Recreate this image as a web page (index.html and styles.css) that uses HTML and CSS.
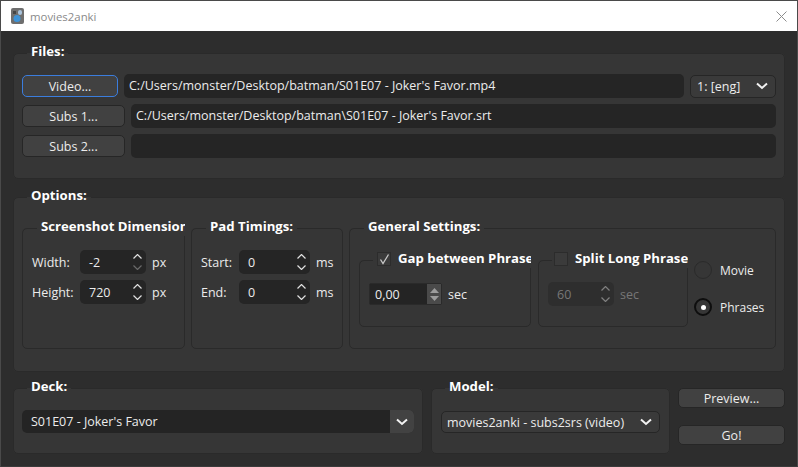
FILE: index.html
```html
<!DOCTYPE html>
<html lang="en">
  <head>
    <meta charset="UTF-8" />
    <title>movies2anki</title>
    <link rel="stylesheet" href="styles.css">
  </head>
  <body>
    <div class="window">
      <div class="titlebar">
        <svg class="app-icon" width="13" height="16" viewBox="0 0 13 16">
          <rect x="0" y="0" width="13" height="16" rx="2" fill="#6e6e6e" />
          <rect x="7" y="2" width="4" height="5" rx="2" fill="#a9c3dc" />
          <circle cx="6" cy="10.5" r="3.5" fill="#3d93d8" />
          <rect x="2" y="3" width="3" height="3" fill="#454545" />
        </svg>
        <span class="app-title">movies2anki</span>
        <svg class="close-icon" width="11" height="11" viewBox="0 0 11 11">
          <path d="M0.5 0.5 L10.5 10.5 M10.5 0.5 L0.5 10.5" stroke="#8c8c8c" fill="none" />
        </svg>
      </div>

      <div class="content">
        <fieldset class="group files-group">
          <legend>Files:</legend>
          <div class="file-row">
            <button class="btn btn-focus video-btn">Video...</button>
            <div class="line-edit">C:/Users/monster/Desktop/batman/S01E07 - Joker's Favor.mp4</div>
            <div class="combo track-combo">
              <span>1: [eng]</span>
              <svg class="chevron" width="12" height="8" viewBox="0 0 12 8"><path d="M1 1.5 L6 6 L11 1.5" /></svg>
            </div>
          </div>
          <div class="file-row">
            <button class="btn subs-btn">Subs 1...</button>
            <div class="line-edit">C:/Users/monster/Desktop/batman\S01E07 - Joker's Favor.srt</div>
          </div>
          <div class="file-row">
            <button class="btn subs-btn">Subs 2...</button>
            <div class="line-edit"></div>
          </div>
        </fieldset>

        <fieldset class="group options-group">
          <legend>Options:</legend>
          <div class="options-row">
            <fieldset class="group inner dims-group">
              <legend class="clipped">Screenshot Dimensions:</legend>
              <div class="field-grid dims-grid">
                <span>Width:</span>
                <div class="spin">
                  <span>-2</span>
                  <div class="spin-arrows">
                    <svg width="9" height="5" viewBox="0 0 9 5"><path d="M0.5 4.5 L4.5 0.5 L8.5 4.5" /></svg>
                    <svg class="dim" width="9" height="5" viewBox="0 0 9 5"><path d="M0.5 0.5 L4.5 4.5 L8.5 0.5" /></svg>
                  </div>
                </div>
                <span>px</span>
                <span>Height:</span>
                <div class="spin">
                  <span>720</span>
                  <div class="spin-arrows">
                    <svg width="9" height="5" viewBox="0 0 9 5"><path d="M0.5 4.5 L4.5 0.5 L8.5 4.5" /></svg>
                    <svg width="9" height="5" viewBox="0 0 9 5"><path d="M0.5 0.5 L4.5 4.5 L8.5 0.5" /></svg>
                  </div>
                </div>
                <span>px</span>
              </div>
            </fieldset>

            <fieldset class="group inner pad-group">
              <legend>Pad Timings:</legend>
              <div class="field-grid pad-grid">
                <span>Start:</span>
                <div class="spin">
                  <span>0</span>
                  <div class="spin-arrows">
                    <svg width="9" height="5" viewBox="0 0 9 5"><path d="M0.5 4.5 L4.5 0.5 L8.5 4.5" /></svg>
                    <svg width="9" height="5" viewBox="0 0 9 5"><path d="M0.5 0.5 L4.5 4.5 L8.5 0.5" /></svg>
                  </div>
                </div>
                <span>ms</span>
                <span>End:</span>
                <div class="spin">
                  <span>0</span>
                  <div class="spin-arrows">
                    <svg width="9" height="5" viewBox="0 0 9 5"><path d="M0.5 4.5 L4.5 0.5 L8.5 4.5" /></svg>
                    <svg width="9" height="5" viewBox="0 0 9 5"><path d="M0.5 0.5 L4.5 4.5 L8.5 0.5" /></svg>
                  </div>
                </div>
                <span>ms</span>
              </div>
            </fieldset>

            <fieldset class="group inner general-group">
              <legend>General Settings:</legend>
              <div class="general-row">
                <fieldset class="group check-group gap-group">
                  <legend class="check-legend">
                    <span class="checkbox">
                      <svg width="11" height="11" viewBox="0 0 11 11"><path d="M1.5 5.5 L4 9.5 L9.5 0.5" /></svg>
                    </span>
                    <span>Gap between Phrases</span>
                  </legend>
                  <div class="spin-row">
                    <div class="spin-small">
                      <span>0,00</span>
                      <div class="step-block">
                        <svg width="9" height="5" viewBox="0 0 9 5"><path d="M4.5 0 L9 5 L0 5 Z" /></svg>
                        <svg width="9" height="5" viewBox="0 0 9 5"><path d="M0 0 L9 0 L4.5 5 Z" /></svg>
                      </div>
                    </div>
                    <span>sec</span>
                  </div>
                </fieldset>

                <fieldset class="group check-group split-group">
                  <legend class="check-legend">
                    <span class="checkbox"></span>
                    <span>Split Long Phrases</span>
                  </legend>
                  <div class="spin-row disabled">
                    <div class="spin split-spin">
                      <span>60</span>
                      <div class="spin-arrows">
                        <svg width="9" height="5" viewBox="0 0 9 5"><path d="M0.5 4.5 L4.5 0.5 L8.5 4.5" /></svg>
                        <svg width="9" height="5" viewBox="0 0 9 5"><path d="M0.5 0.5 L4.5 4.5 L8.5 0.5" /></svg>
                      </div>
                    </div>
                    <span>sec</span>
                  </div>
                </fieldset>

                <div class="radios">
                  <div class="radio-item"><span class="radio"></span><span>Movie</span></div>
                  <div class="radio-item"><span class="radio radio-on"></span><span>Phrases</span></div>
                </div>
              </div>
            </fieldset>
          </div>
        </fieldset>

        <div class="bottom-row">
          <fieldset class="group deck-group">
            <legend>Deck:</legend>
            <div class="deck-combo">
              <span>S01E07 - Joker's Favor</span>
              <div class="deck-arrow">
                <svg class="chevron" width="12" height="8" viewBox="0 0 12 8"><path d="M1 1.5 L6 6 L11 1.5" /></svg>
              </div>
            </div>
          </fieldset>

          <fieldset class="group model-group">
            <legend>Model:</legend>
            <div class="combo model-combo">
              <span>movies2anki - subs2srs (video)</span>
              <svg class="chevron" width="12" height="8" viewBox="0 0 12 8"><path d="M1 1.5 L6 6 L11 1.5" /></svg>
            </div>
          </fieldset>

          <div class="actions">
            <button class="btn">Preview...</button>
            <button class="btn">Go!</button>
          </div>
        </div>
      </div>
    </div>
  </body>
</html>
```

FILE: styles.css
```css
* {
  box-sizing: border-box;
}

body {
  margin: 0;
  font-family: "Open Sans", "Noto Sans", sans-serif;
  font-size: 12.5px;
  color: #ececec;
  overflow: hidden;
}

.window {
  width: 798px;
  height: 467px;
  border: 1px solid #4a4a4a;
  border-bottom-color: #3a3a3a;
  background-color: #2d2d2d;
}

.titlebar {
  display: flex;
  align-items: center;
  height: 30px;
  padding: 0 10px 0 10px;
  background-color: #fff;
}

.app-icon {
  margin-right: 6px;
}

.app-title {
  font-size: 11.4px;
  color: #8a8a8a;
}

.close-icon {
  margin-left: auto;
}

.content {
  display: flex;
  flex-direction: column;
  padding: 14px 12px 0;
}

/* group boxes */
.group {
  min-width: 0;
  margin: 0;
  padding: 0 8px;
  border: 1px solid #2a2a2a;
  border-radius: 5px;
  background-color: #363636;
}

legend {
  height: 16px;
  margin-left: 5px;
  padding: 0 4px;
  font-size: 13.2px;
  font-weight: bold;
  line-height: 12px;
  color: #fff;
  white-space: nowrap;
}

.inner > legend {
  margin-left: 6px;
  line-height: 13px;
}

.clipped {
  width: 148px;
  overflow: hidden;
}

.files-group {
  display: flex;
  flex-direction: column;
  gap: 6px;
  height: 134px;
  padding-top: 13px;
}

.file-row {
  display: flex;
  align-items: center;
  gap: 6px;
}

.line-edit {
  flex: 1;
  height: 24px;
  padding-left: 5px;
  border-radius: 5px;
  background-color: #252525;
  line-height: 24px;
  white-space: nowrap;
}

.btn {
  height: 22px;
  padding: 0;
  border: 1px solid #262626;
  border-radius: 5px;
  background-color: #414141;
  color: #ececec;
  font-family: inherit;
  font-size: 12.5px;
}

.btn-focus {
  border-color: #3b7ddd;
}

.video-btn {
  width: 96px;
}

.subs-btn {
  width: 103px;
}

.combo {
  display: flex;
  align-items: center;
  justify-content: space-between;
  height: 23px;
  padding: 0 7px 0 6px;
  border: 1px solid #262626;
  border-radius: 5px;
  background-color: #3a3a3a;
}

.track-combo {
  width: 86px;
}

.chevron path {
  fill: none;
  stroke: #f2f2f2;
  stroke-width: 2;
}

.options-group {
  height: 183px;
  margin-top: 10px;
  padding-top: 15px;
}

.options-row {
  display: flex;
  gap: 6px;
}

.inner {
  height: 129px;
}

.dims-group {
  width: 163px;
}

.pad-group {
  width: 152px;
}

.general-group {
  width: 427px;
}

.field-grid {
  display: grid;
  grid-auto-rows: 24px;
  align-items: center;
  row-gap: 6px;
  column-gap: 6px;
  margin-top: 14px;
}

.dims-grid {
  grid-template-columns: 42px 66px auto;
  padding-left: 1px;
}

.pad-grid {
  grid-template-columns: 32px 71px auto;
  padding-left: 1px;
}

.spin {
  display: flex;
  align-items: center;
  justify-content: space-between;
  height: 24px;
  padding: 0 4px 0 9px;
  border-radius: 5px;
  background-color: #252525;
}

.spin-arrows {
  display: flex;
  flex-direction: column;
  gap: 6px;
}

.spin-arrows svg {
  display: block;
}

.spin-arrows path {
  fill: none;
  stroke: #e0e0e0;
  stroke-width: 1.2;
}

.spin-arrows .dim path {
  stroke: #6a6a6a;
}

/* general settings */
.general-row {
  display: flex;
  margin-top: 16px;
  padding-left: 1px;
}

.check-group {
  height: 75px;
}

.gap-group {
  width: 172px;
}

.split-group {
  width: 150px;
  margin-left: 7px;
}

.check-legend {
  display: flex;
  align-items: flex-start;
  gap: 7px;
  overflow: hidden;
}

.gap-group .check-legend {
  width: 158px;
  margin-left: 5px;
}

.split-group .check-legend {
  width: 136px;
  margin-left: 5px;
  padding-left: 2px;
}

.checkbox {
  display: flex;
  flex: none;
  align-items: center;
  justify-content: center;
  width: 14px;
  height: 14px;
  border: 1px solid #2c2c2c;
  background-color: #3b3b3b;
}

.checkbox path {
  fill: none;
  stroke: #c8c8c8;
  stroke-width: 1.3;
}

.spin-row {
  display: flex;
  align-items: center;
  gap: 6px;
  height: 24px;
  margin-top: 14px;
  padding-left: 1px;
}

.spin-small {
  display: flex;
  align-items: center;
  justify-content: space-between;
  width: 73px;
  height: 22px;
  padding-left: 5px;
  border: 1px solid #2a2a2a;
  border-radius: 2px;
  background-color: #242424;
}

.step-block {
  display: flex;
  flex-direction: column;
  align-items: center;
  justify-content: center;
  gap: 3px;
  width: 14px;
  height: 20px;
  background-color: #4a4a4a;
}

.step-block svg {
  display: block;
}

.step-block path {
  fill: #9c9c9c;
}

.disabled {
  color: #777;
}

.split-spin {
  width: 66px;
  background-color: #2e2e2e;
}

.disabled .spin-arrows path {
  stroke: #808080;
}

.radios {
  display: flex;
  flex-direction: column;
  gap: 19px;
  margin: 9px 0 0 6px;
  font-size: 12px;
}

.radio-item {
  display: flex;
  align-items: center;
  gap: 8px;
  height: 18px;
}

.radio {
  display: flex;
  align-items: center;
  justify-content: center;
  width: 18px;
  height: 18px;
  border: 1px solid #2a2a2a;
  border-radius: 50%;
}

.radio-on {
  border: 2px solid #0e0e0e;
}

.radio-on::after {
  content: "";
  width: 5px;
  height: 5px;
  border-radius: 50%;
  background-color: #fff;
}

/* bottom row */
.bottom-row {
  display: flex;
  gap: 8px;
  margin-top: 8px;
}

.deck-group,
.model-group {
  height: 74px;
}

.deck-group {
  width: 410px;
  padding-top: 14px;
}

.deck-combo {
  display: flex;
  align-items: center;
  justify-content: space-between;
  height: 23px;
  padding-left: 9px;
  overflow: hidden;
  border-radius: 5px;
  background-color: #242424;
}

.deck-arrow {
  display: flex;
  align-items: center;
  justify-content: center;
  width: 24px;
  height: 23px;
  background-color: #424242;
}

.model-group {
  width: 239px;
  padding: 15px 9px 0;
}

.model-group > legend {
  margin-left: 4px;
}

.model-combo {
  height: 22px;
  padding-left: 5px;
}

.actions {
  display: flex;
  flex-direction: column;
  gap: 17px;
  width: 107px;
  margin-top: 8px;
}

.actions .btn {
  height: 20px;
}
```
